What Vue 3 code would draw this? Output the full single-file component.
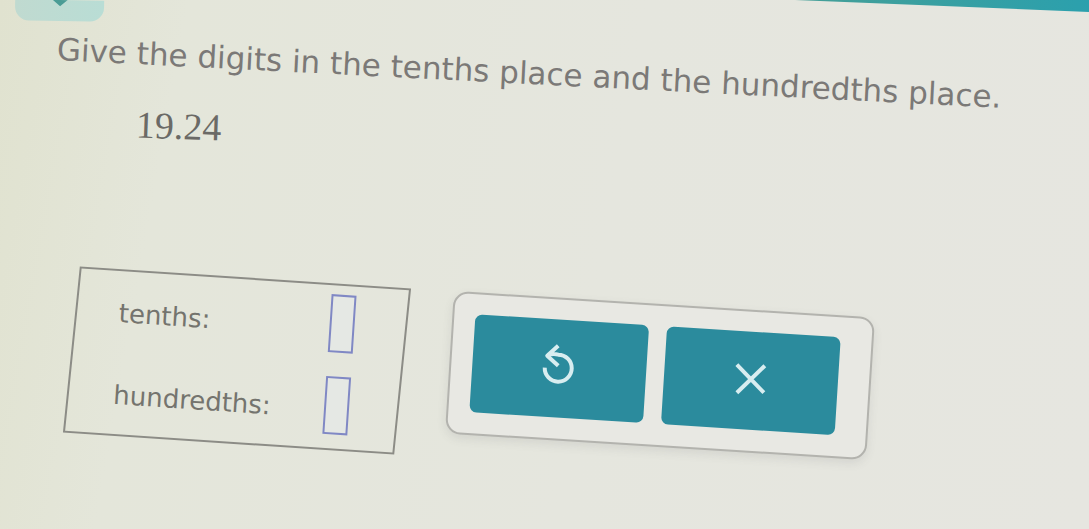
<script setup>
import { reactive } from 'vue'

const places = reactive([
  { id: 'tenths', label: 'tenths:', value: '' },
  { id: 'hundredths', label: 'hundredths:', value: '' },
])

function clearAll() {
  places.forEach((place) => {
    place.value = ''
  })
}
</script>

<template>
  <div class="page">
    <header class="top">
      <div class="bar"></div>
      <button class="tab" type="button" aria-label="Expand">
        <svg width="20" height="12" viewBox="0 0 20 12" aria-hidden="true">
          <path d="M3 -3L10 3L17 -3" fill="none" stroke="#4a9c95" stroke-width="5" />
        </svg>
      </button>
    </header>

    <main>
      <h1>Give the digits in the tenths place and the hundredths place.</h1>
      <p class="number">19.24</p>

      <section class="work">
        <form class="answers" @submit.prevent>
          <div v-for="place in places" :key="place.id" class="row">
            <label :for="place.id">{{ place.label }}</label>
            <input :id="place.id" v-model="place.value" type="text" maxlength="1" />
          </div>
        </form>

        <div class="tools">
          <button type="button" aria-label="Undo">
            <svg width="44" height="44" viewBox="0 0 44 44" aria-hidden="true">
              <path d="M21 -1L10 9L21 19M10 9C14 7 18 7 21 8A13.500 13.500 0 1 1 7.500 21" />
            </svg>
          </button>
          <button type="button" aria-label="Clear" @click="clearAll">
            <svg width="44" height="44" viewBox="0 0 44 44" aria-hidden="true">
              <path d="M8 6L35 34M36 7L8 34" />
            </svg>
          </button>
        </div>
      </section>
    </main>
  </div>
</template>

<style>
body {
  margin: 0;
}
</style>

<style scoped>
.page {
  position: relative;
  box-sizing: border-box;
  min-height: 100vh;
  overflow: hidden;
  color: #7b7977;
  font-family: Verdana, "DejaVu Sans", sans-serif;
  background: linear-gradient(100deg, #e0e2cf 0%, #e4e6da 16%, #e5e6de 55%, #e6e6e0 100%);
}

.top {
  height: 24px;
  padding-left: 15px;
}

.bar {
  position: absolute;
  top: 0;
  right: 0;
  width: 27%;
  height: 12px;
  background: linear-gradient(90deg, #459f97, #2ba0ad);
  clip-path: polygon(0 0, 100% 0, 100% 100%);
}

.tab {
  display: flex;
  align-items: flex-start;
  justify-content: center;
  width: 89px;
  height: 21px;
  padding: 0;
  border: 0;
  border-radius: 0 0 14px 14px;
  background: linear-gradient(90deg, #c0dad0, #b9ddd5);
  transform: rotate(1deg);
}

h1 {
  margin: 5px 0 0 57px;
  font-size: 31px;
  line-height: 40px;
  font-weight: 400;
  white-space: nowrap;
  transform: rotate(2.9deg);
  transform-origin: left center;
}

.number {
  width: max-content;
  margin: 35px 0 0 136px;
  color: #6b6a66;
  font-family: "Liberation Serif", serif;
  font-size: 38px;
  line-height: 44px;
  transform: rotate(2deg);
}

.work {
  display: flex;
  align-items: flex-start;
  gap: 46px;
  margin: 129px 32px 0 71px;
}

.answers {
  position: relative;
  display: flex;
  flex: 0 1 332px;
  flex-direction: column;
  gap: 24px;
  box-sizing: border-box;
  padding: 11px 51px 16px 45px;
  transform: rotate(3.8deg);
}

.answers::before {
  content: "";
  position: absolute;
  inset: 0;
  border: 2px solid #8c8c86;
  pointer-events: none;
  transform: skewX(-2deg);
}

.row {
  display: flex;
  align-items: center;
  justify-content: space-between;
}

label {
  padding-top: 8px;
  color: #74746e;
  font-size: 26px;
  line-height: 32px;
}

input {
  box-sizing: border-box;
  width: 25px;
  height: 58px;
  padding: 0 2px;
  border: 2px solid #8088c4;
  border-radius: 0;
  outline: 0;
  background: #e5e8e4;
  color: inherit;
  font: inherit;
  text-align: center;
}

.tools {
  display: flex;
  flex: 0 1 422px;
  gap: 18px;
  box-sizing: border-box;
  margin-top: 27px;
  padding: 20px 31px 21px 21px;
  border: 2px solid #b3b3ae;
  border-radius: 15px;
  background: #e8e8e3;
  box-shadow: 0 4px 10px rgba(90, 90, 100, 0.12);
  transform: rotate(3.6deg);
}

.tools button {
  display: flex;
  flex: 1;
  align-items: center;
  justify-content: center;
  height: 98px;
  padding: 0;
  border: 0;
  border-radius: 7px;
  background: #2b8b9d;
}

.tools svg {
  overflow: visible;
  transform: rotate(-3.6deg);
}

.tools path {
  fill: none;
  stroke: #d8edf0;
  stroke-width: 4;
  stroke-linejoin: round;
}
</style>
